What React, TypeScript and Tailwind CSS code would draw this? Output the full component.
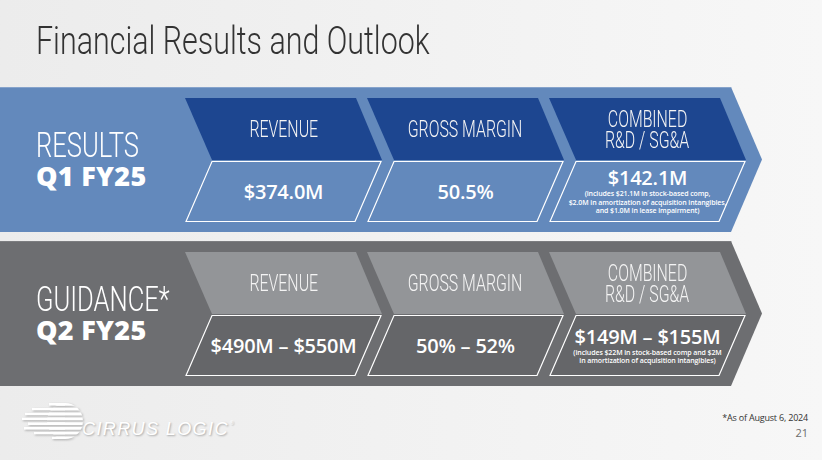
import React from "react";

type Item = {
  title: string[];
  value: string;
  notes?: string[];
};

// no condensed face is installed, so Roboto Light is squeezed with scale-x
const narrow = "[font-family:'Roboto','Liberation_Sans',sans-serif] font-light";
const body = "[font-family:'Open_Sans','Liberation_Sans',sans-serif]";

const results: Item[] = [
  { title: ["REVENUE"], value: "$374.0M" },
  { title: ["GROSS MARGIN"], value: "50.5%" },
  {
    title: ["COMBINED", "R&D / SG&A"],
    value: "$142.1M",
    notes: [
      "(includes $21.1M in stock-based comp,",
      "$2.0M in amortization of acquisition intangibles,",
      "and $1.0M in lease impairment)",
    ],
  },
];

const guidance: Item[] = [
  { title: ["REVENUE"], value: "$490M – $550M" },
  { title: ["GROSS MARGIN"], value: "50% – 52%" },
  {
    title: ["COMBINED", "R&D / SG&A"],
    value: "$149M – $155M",
    notes: ["(includes $22M in stock-based comp and $2M", "in amortization of acquisition intangibles)"],
  },
];

function Chevron({ item, first, fill, valueFill }: { item: Item; first: boolean; fill: string; valueFill: string }) {
  return (
    <div className={`relative w-[197px] h-[124px] shrink-0 ${first ? "" : "-ml-[15px]"}`}>
      <svg className="absolute inset-0" width="197" height="124" viewBox="0 0 197 124">
        <polygon points="0,0 171,0 197,62 27,62" fill={fill} />
        <polygon points="27,63.5 196,63.5 170,123.5 1,123.5" fill={valueFill} stroke="#ffffff" strokeWidth="1.2" />
      </svg>
      <div className="relative flex flex-col">
        <div className="h-[63px] flex flex-col items-center justify-center text-[#f4f4f4]">
          {item.title.map((t) => (
            <span key={t} className={`${narrow} inline-block scale-x-[0.69] text-[23px] leading-[21px] whitespace-nowrap`}>
              {t}
            </span>
          ))}
        </div>
        <div className={`${body} h-[61px] flex flex-col items-center justify-center text-white`}>
          <span className="text-[20px] leading-[22px] font-semibold tracking-[-0.2px] whitespace-nowrap">{item.value}</span>
          {item.notes && (
            <div className="mt-[1px] flex flex-col items-center">
              {item.notes.map((n) => (
                <span key={n} className="text-[7px] leading-[8.5px] font-semibold whitespace-nowrap tracking-[-0.1px]">
                  {n}
                </span>
              ))}
            </div>
          )}
        </div>
      </div>
    </div>
  );
}

function Band({
  bandClass,
  fill,
  valueFill,
  label,
  sub,
  items,
}: {
  bandClass: string;
  fill: string;
  valueFill: string;
  label: string;
  sub: string;
  items: Item[];
}) {
  return (
    <div
      className={`${bandClass} w-[762px] h-[145px] flex items-start pt-[10px] [clip-path:polygon(0_0,731px_0,762px_50%,731px_100%,0_100%)]`}
    >
      <div className="w-[185px] h-[124px] shrink-0 pl-[36px] flex flex-col justify-center text-white">
        <span className={`${narrow} inline-block origin-left scale-x-[0.73] text-[35px] leading-[31px] whitespace-nowrap`}>
          {label}
        </span>
        <span className={`${body} text-[27px] leading-[29px] font-extrabold tracking-[0.3px] whitespace-nowrap`}>{sub}</span>
      </div>
      <div className="flex">
        {items.map((it, i) => (
          <Chevron key={i} item={it} first={i === 0} fill={fill} valueFill={valueFill} />
        ))}
      </div>
    </div>
  );
}

function CirrusMark() {
  const stripes = [
    { y: 0, x: 27 },
    { y: 4.8, x: 10 },
    { y: 9.6, x: 3 },
    { y: 14.4, x: 0 },
    { y: 19.2, x: 6 },
    { y: 24, x: 2 },
    { y: 28.8, x: 12 },
    { y: 33.6, x: 30 },
  ];
  return (
    <svg width="62" height="36" viewBox="0 0 62 36" className="drop-shadow-[1px_1px_1px_rgba(0,0,0,0.28)]">
      <defs>
        <clipPath id="cl-stripes">
          {stripes.map((s) => (
            <rect key={s.y} x="0" y={s.y} width="62" height="2.8" />
          ))}
        </clipPath>
      </defs>
      <g clipPath="url(#cl-stripes)" fill="#ffffff">
        <circle cx="43" cy="18" r="18" />
        {stripes.map((s) => (
          <rect key={s.y} x={s.x} y={s.y} width={43 - s.x} height="2.8" />
        ))}
      </g>
    </svg>
  );
}

export default function App() {
  return (
    <div className="w-[822px] h-[460px] overflow-hidden bg-gradient-to-r from-[#ececec] to-[#f7f7f7] flex flex-col">
      <div className="pt-[22px] pl-[36px]">
        <h1 className={`${narrow} inline-block origin-left scale-x-[0.78] text-[39px] leading-[39px] text-[#333333] whitespace-nowrap`}>
          Financial Results and Outlook
        </h1>
      </div>
      <div className="mt-[26px] flex flex-col gap-[9px]">
        <Band
          bandClass="bg-[#6389bc] border-t border-[#86a3cb]"
          fill="#1d4690"
          valueFill="none"
          label="RESULTS"
          sub="Q1 FY25"
          items={results}
        />
        <Band
          bandClass="bg-[#6d6e71] border-t border-[#7c7d80]"
          fill="#939598"
          valueFill="#656669"
          label="GUIDANCE*"
          sub="Q2 FY25"
          items={guidance}
        />
      </div>
      <div className="flex-1 flex items-start justify-between pl-[22px] pr-[14px] pt-[17px]">
        <div className="flex items-end">
          <CirrusMark />
          <span className="[font-family:'Liberation_Sans',sans-serif] italic text-white text-[18px] leading-none tracking-[1.4px] -ml-[2px] mb-[1px] [text-shadow:1px_1px_2px_rgba(0,0,0,0.3)]">
            CIRRUS LOGIC
          </span>
          <span className="text-white text-[5px] mb-[12px] ml-[1px] [text-shadow:1px_1px_1px_rgba(0,0,0,0.25)]">®</span>
        </div>
        <div className={`${body} flex flex-col items-end pt-[9px]`}>
          <span className="text-[9px] leading-[11px] text-[#333333] tracking-[-0.2px]">*As of August 6, 2024</span>
          <span className="text-[11px] leading-[14px] text-[#6b6b6b] mt-[3px]">21</span>
        </div>
      </div>
    </div>
  );
}
